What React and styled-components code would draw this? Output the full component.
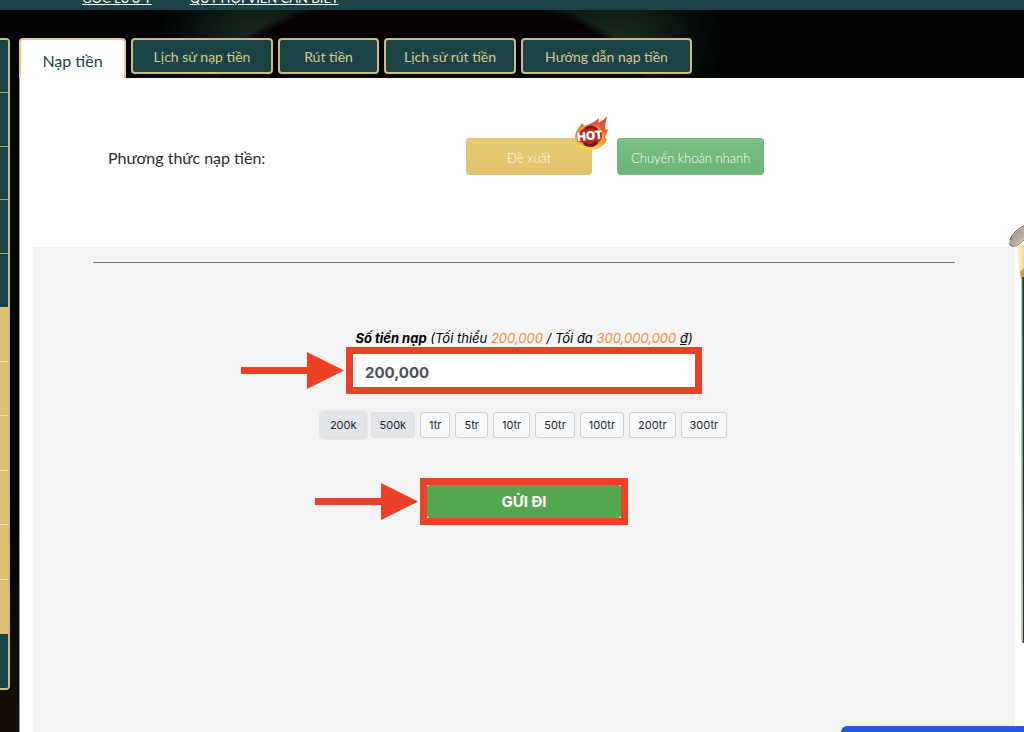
import React, { useState } from "react";
import styled, { createGlobalStyle, css } from "styled-components";

const color = {
  teal: "#1b4345",
  gold: "#dfbf72",
  line: "#cdbc80",
  red: "#ec4027",
  orange: "#f58a38",
  grey: "#f4f4f4",
};
const display = `"Lato", "Noto Sans", sans-serif`;
const body = `"Inter", "Noto Sans", sans-serif`;

const GlobalStyle = createGlobalStyle`
  *, *::before, *::after { box-sizing: border-box; }
  body { margin: 0; background: #000; font-family: ${body}; }
  button, input { font: inherit; margin: 0; }
`;

const Page = styled.div`
  position: relative;
  display: flex;
  flex-direction: column;
  height: 100vh;
  overflow: hidden;
  background:
    radial-gradient(ellipse 225px 105px at 430px 95px, #070202 0 94%, transparent 100%),
    radial-gradient(ellipse 100px 80px at 258px 42px, #1c2e22, transparent),
    radial-gradient(ellipse 110px 80px at 615px 42px, #1c2e20, transparent),
    radial-gradient(ellipse 60px 240px at 10px 732px, #180e08, transparent),
    #000303;
`;

const Header = styled.header`
  display: flex;
  align-items: flex-end;
  gap: 38px;
  height: 10px;
  flex: none;
  padding: 0 0 4px 82px;
  background: ${color.teal};
  overflow: hidden;
`;

const HeaderLink = styled.a`
  color: #fff;
  font: 400 13px/16px ${display};
  white-space: nowrap;
`;

const Content = styled.div`
  display: flex;
  flex: 1;
  gap: 9px;
  padding-top: 28px;
  min-height: 0;
`;

const Sidebar = styled.nav`
  flex: none;
  width: 10px;
  align-self: flex-start;
  border: 2px solid ${color.line};
  border-left: 0;
  border-radius: 0 4px 4px 0;
  overflow: hidden;
`;

const MenuGroup = styled.div`
  display: flex;
  flex-direction: column;
  height: ${(p) => p.$height}px;
  background: ${(p) => (p.$gold ? color.gold : color.teal)};
`;

const MenuItem = styled.div`
  flex: 1;
  border-bottom: 1px solid ${(p) => (p.$gold ? "#efe0bd" : "#a4a673")};
  &:last-child { border-bottom-color: transparent; }
`;

const Main = styled.main`
  display: flex;
  flex-direction: column;
  flex: 1;
  min-width: 0;
`;

const Tabs = styled.div`
  display: flex;
  align-items: flex-start;
  gap: 5px;
  flex: none;
  height: 40px;
`;

const Tab = styled.button`
  display: flex;
  align-items: center;
  justify-content: center;
  flex: none;
  width: ${(p) => p.$width}px;
  height: 36px;
  padding: 2px 0 0;
  border: 2px solid ${color.line};
  border-radius: 4px;
  background: ${color.teal};
  color: #d9cc91;
  font: 400 14px/20px ${display};
  white-space: nowrap;
  ${(p) =>
    p.$active &&
    css`
      height: 40px;
      padding-top: 4px;
      border-color: #e2cb8c;
      border-bottom: 0;
      border-radius: 4px 4px 0 0;
      background: #fff;
      color: ${color.teal};
      font-size: 16px;
    `}
`;

const Panel = styled.section`
  display: flex;
  flex-direction: column;
  flex: 1;
  padding: 0 9px 0 13px;
  border-left: 1px solid #999;
  background: #fff;
`;

const Methods = styled.div`
  display: grid;
  grid-template-columns: 5fr 7fr;
  align-items: center;
  padding: 60px 60px 72px;
`;

const MethodTitle = styled.div`
  padding: 2px 15px 0;
  color: #2b2b33;
  font: 400 16px/24px ${display};
`;

const MethodList = styled.div`
  display: flex;
  gap: 25px;
  padding-left: 14px;
`;

const MethodButton = styled.button`
  position: relative;
  width: ${(p) => p.$width}px;
  height: 37px;
  padding: 2px 0 0;
  border: 1px solid ${(p) => (p.$green ? "#70b77b" : "#dcc47b")};
  border-radius: 3px;
  background: ${(p) =>
    p.$green
      ? "linear-gradient(#79bf86, #6bb376)"
      : "linear-gradient(#e7cc76, #e1c268)"};
  color: #fffdf6;
  font: 300 13px/18px ${display};
`;

const Hot = styled.svg`
  position: absolute;
  right: -18px;
  top: -24px;
`;

const FormArea = styled.div`
  display: flex;
  flex-direction: column;
  flex: 1;
  padding: 15px 60px 0;
  background: ${color.grey};
`;

const Rule = styled.hr`
  width: 100%;
  height: 1px;
  margin: 0;
  border: 0;
  background: #777;
`;

const Form = styled.form`
  display: flex;
  flex-direction: column;
  align-items: center;
  padding-top: 66px;
`;

const AmountLabel = styled.label`
  color: #000;
  font: italic 400 13px/18px ${body};
  white-space: nowrap;
`;

const Limit = styled.span`
  color: ${color.orange};
`;

const Frame = styled.div`
  position: relative;
  display: flex;
  width: ${(p) => p.$width}px;
  height: 47px;
  border: 7px solid ${color.red};
  background: #fff;
`;

const Arrow = styled.svg`
  position: absolute;
  right: calc(100% + 9px);
  top: -2px;
  fill: ${color.red};
`;

const AmountInput = styled.input`
  width: 100%;
  padding: 4px 12px 0;
  border: 0;
  outline: 0;
  background: transparent;
  color: #4b5058;
  font: 700 15px/20px ${body};
`;

const Presets = styled.div`
  display: flex;
  gap: 5px;
  padding: 18px 0 40px;
`;

const Preset = styled.button`
  height: 26px;
  padding: 0 8px;
  border: 1px solid ${(p) => (p.$picked ? "#dde1e6" : "#d0d0d0")};
  border-radius: 3px;
  background: ${(p) => (p.$picked ? "#e2e6ea" : "#f8f9fa")};
  box-shadow: ${(p) => (p.$focused ? "0 0 0 2px #e6e7e8" : "none")};
  color: #212529;
  font: 400 11px/18px ${body};
`;

const Submit = styled.button`
  width: 100%;
  border: 0;
  border-radius: 3px;
  background: #55a651;
  color: #fff;
  font: 700 15px/20px ${body};
`;

const SideBanner = styled.aside`
  position: absolute;
  top: 222px;
  right: 0;
  width: 15px;
  height: 421px;
  overflow: hidden;
`;

const ChatBar = styled.div`
  position: fixed;
  right: 0;
  bottom: 0;
  width: 183px;
  height: 6px;
  border-radius: 6px 0 0 0;
  background: #2459d8;
`;

const tabs = [
  ["Nạp tiền", 107],
  ["Lịch sử nạp tiền", 142],
  ["Rút tiền", 101],
  ["Lịch sử rút tiền", 132],
  ["Hướng dẫn nạp tiền", 171],
];

const presets = [
  ["200k", "200,000"],
  ["500k", "500,000"],
  ["1tr", "1,000,000"],
  ["5tr", "5,000,000"],
  ["10tr", "10,000,000"],
  ["50tr", "50,000,000"],
  ["100tr", "100,000,000"],
  ["200tr", "200,000,000"],
  ["300tr", "300,000,000"],
];

function PointerArrow() {
  return (
    <Arrow width="103" height="37" viewBox="0 0 103 37" aria-hidden="true">
      <path d="M0 15H66V0L103 18.500L66 37V22H0Z" />
    </Arrow>
  );
}

function HotBadge() {
  return (
    <Hot width="36" height="36" viewBox="0 0 36 36" role="img" aria-label="HOT">
      <defs>
        <linearGradient id="flame" x1="0.6" y1="0" x2="0.4" y2="1">
          <stop offset="0" stopColor="#e93c35" />
          <stop offset="0.5" stopColor="#f0702f" />
          <stop offset="1" stopColor="#fbe04a" />
        </linearGradient>
      </defs>
      <path
        d="M2 22C2 16 7 12 9 8L11 11C15 10 20 8 26 3L25 8C29 6 32 4 34 1C33 8 31 11 33 15L35 14C34 18 33 19 32 22L34 25C30 32 24 35 17 35C8 35 1 30 2 22Z"
        fill="url(#flame)"
      />
      <ellipse cx="17" cy="21" rx="13" ry="10" fill="#bd2b20" stroke="#f2a83b" strokeWidth="2" />
      <path d="M12 14C17 10 22 12 24 15M11 28C15 32 21 31 24 27" fill="none" stroke="#701e1b" strokeWidth="3" />
      <text
        x="17"
        y="25"
        textAnchor="middle"
        fontFamily="Inter, sans-serif"
        fontWeight="900"
        fontSize="12"
        fill="#fff"
        stroke="#a3261e"
        strokeWidth="1"
        paintOrder="stroke"
        transform="rotate(-5 17 22)"
      >
        HOT
      </text>
    </Hot>
  );
}

export default function App() {
  const [amount, setAmount] = useState("200,000");
  return (
    <>
      <GlobalStyle />
      <Page>
        <Header>
          <HeaderLink href="#luu-y">GÓC LƯU Ý</HeaderLink>
          <HeaderLink href="#hoi-vien">QUÝ HỘI VIÊN CẦN BIẾT</HeaderLink>
        </Header>
        <Content>
          <Sidebar>
            <MenuGroup $height={267}>
              {[1, 2, 3, 4, 5].map((n) => <MenuItem key={n} />)}
            </MenuGroup>
            <MenuGroup $gold $height={327}>
              {[1, 2, 3, 4, 5, 6].map((n) => <MenuItem key={n} $gold />)}
            </MenuGroup>
            <MenuGroup $height={54} />
          </Sidebar>
          <Main>
            <Tabs>
              {tabs.map(([name, width], i) => (
                <Tab key={name} type="button" $width={width} $active={i === 0}>
                  {name}
                </Tab>
              ))}
            </Tabs>
            <Panel>
              <Methods>
                <MethodTitle>Phương thức nạp tiền:</MethodTitle>
                <MethodList>
                  <MethodButton type="button" $width={126}>
                    Đề xuất
                    <HotBadge />
                  </MethodButton>
                  <MethodButton type="button" $green $width={147}>
                    Chuyển khoản nhanh
                  </MethodButton>
                </MethodList>
              </Methods>
              <FormArea>
                <Rule />
                <Form onSubmit={(e) => e.preventDefault()}>
                  <AmountLabel htmlFor="amount">
                    <b>Số tiền nạp</b> (Tối thiểu <Limit>200,000</Limit> / Tối đa{" "}
                    <Limit>300,000,000</Limit> ₫)
                  </AmountLabel>
                  <Frame $width={356}>
                    <PointerArrow />
                    <AmountInput
                      id="amount"
                      value={amount}
                      onChange={(e) => setAmount(e.target.value)}
                    />
                  </Frame>
                  <Presets>
                    {presets.map(([name, value], i) => (
                      <Preset
                        key={name}
                        type="button"
                        $picked={i < 2}
                        $focused={i === 0}
                        onClick={() => setAmount(value)}
                      >
                        {name}
                      </Preset>
                    ))}
                  </Presets>
                  <Frame $width={208}>
                    <PointerArrow />
                    <Submit type="submit">GỬI ĐI</Submit>
                  </Frame>
                </Form>
              </FormArea>
            </Panel>
          </Main>
        </Content>
        <SideBanner>
          <svg width="15" height="421" viewBox="0 0 15 421" aria-hidden="true">
            <defs>
              <linearGradient id="pillar" x1="0" y1="0" x2="1" y2="0">
                <stop offset="0" stopColor="#fffbe8" />
                <stop offset="1" stopColor="#f4da80" />
              </linearGradient>
              <linearGradient id="roof" x1="0" y1="0" x2="1" y2="1">
                <stop offset="0" stopColor="#8e817e" />
                <stop offset="1" stopColor="#d5c4bd" />
              </linearGradient>
            </defs>
            <path d="M7 23H15V54H11Z" fill="url(#pillar)" />
            <path d="M15 5C7 8 1 15 0 22C1 26 8 24 15 17Z" fill="url(#roof)" />
            <path d="M15 4C8 7 3 12 1 18" fill="none" stroke="#55504e" strokeWidth="1" />
            <path d="M1 22C2 26 8 25 15 18" fill="none" stroke="#7a625c" strokeWidth="1" />
            <path d="M11 50L15 46V57H12Z" fill="#c9a43c" />
            <path d="M13 55H15V421H14Z" fill="#173b3a" />
            <path d="M13 55V419L14 421" fill="none" stroke="#8f8b60" strokeWidth="1" />
          </svg>
        </SideBanner>
        <ChatBar />
      </Page>
    </>
  );
}
